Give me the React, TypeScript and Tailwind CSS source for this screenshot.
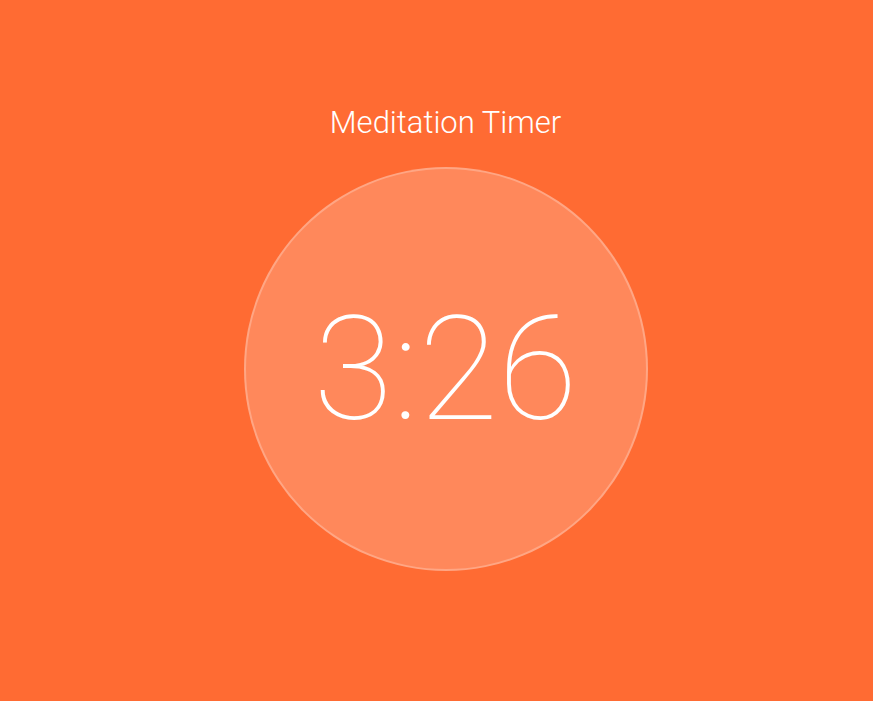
export default function App() {
  return (
    <div
      className="w-full h-[701px] bg-[#ff6b33] flex flex-col items-center pt-[101px] pl-[18px]"
      style={{ fontFamily: "Roboto, 'Liberation Sans', sans-serif" }}
    >
      <h1 className="text-[31px] leading-[44px] font-light text-white">Meditation Timer</h1>
      <div className="mt-[22px] w-[404px] h-[404px] rounded-full bg-white/20 border-2 border-white/25 flex items-center justify-center">
        <span className="text-[145px] leading-none font-thin text-white tracking-normal">3:26</span>
      </div>
    </div>
  );
}
